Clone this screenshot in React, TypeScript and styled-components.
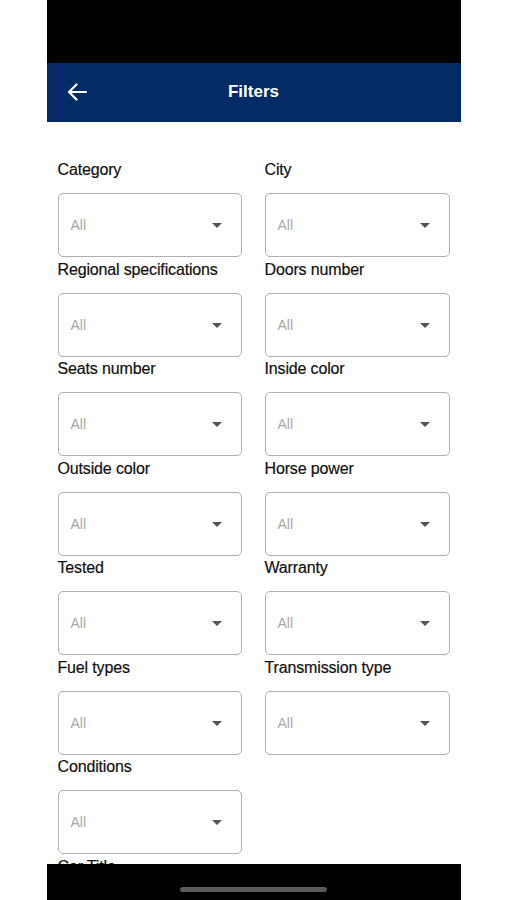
import styled, { createGlobalStyle } from "styled-components";

const GlobalStyle = createGlobalStyle`
  html, body {
    margin: 0;
    padding: 0;
    background: #ffffff;
    font-family: "Liberation Sans", Arial, sans-serif;
  }
`;

const filters = [
  "Category",
  "City",
  "Regional specifications",
  "Doors number",
  "Seats number",
  "Inside color",
  "Outside color",
  "Horse power",
  "Tested",
  "Warranty",
  "Fuel types",
  "Transmission type",
  "Conditions",
];

const Page = styled.div`
  width: 507px;
  height: 900px;
  display: flex;
  justify-content: center;
  background: #ffffff;
`;

const Phone = styled.div`
  width: 414px;
  height: 900px;
  display: flex;
  flex-direction: column;
  position: relative;
  overflow: hidden;
  background: #ffffff;
`;

const StatusBar = styled.div`
  height: 63px;
  background: #000000;
  flex-shrink: 0;
`;

const Header = styled.div`
  height: 59px;
  background: #052b66;
  display: flex;
  align-items: center;
  position: relative;
  flex-shrink: 0;
`;

const BackButton = styled.div`
  width: 20px;
  height: 18px;
  margin-left: 20px;
  margin-top: -2px;
  display: flex;
`;

const Title = styled.div`
  position: absolute;
  left: 0;
  right: 0;
  top: 19px;
  text-align: center;
  color: #ffffff;
  font-size: 17px;
  font-weight: bold;
  pointer-events: none;
`;

const Content = styled.div`
  flex: 1;
  overflow: hidden;
  padding: 38px 11px 0 11px;
`;

const Grid = styled.div`
  display: grid;
  grid-template-columns: 184px 185px;
  column-gap: 23px;
  row-gap: 2.5px;
`;

const Field = styled.div<{ $col?: number }>`
  display: flex;
  flex-direction: column;
  grid-column: ${(p) => (p.$col ? p.$col : "auto")};
`;

const Label = styled.div`
  font-size: 16px;
  line-height: 20px;
  color: #111111;
  margin-bottom: 13px;
  white-space: nowrap;
  letter-spacing: -0.15px;
  -webkit-text-stroke: 0.2px #111111;
`;

const Select = styled.div`
  height: 64px;
  box-sizing: border-box;
  border: 1.5px solid #b0b0b0;
  border-radius: 5px;
  display: flex;
  align-items: center;
  justify-content: space-between;
  padding: 0 19px 0 12px;
`;

const Placeholder = styled.span`
  font-size: 14px;
  color: #a8a8a8;
`;

const Caret = styled.span`
  width: 0;
  height: 0;
  border-left: 5px solid transparent;
  border-right: 5px solid transparent;
  border-top: 5px solid #555555;
  margin-top: 1px;
`;

const BottomBar = styled.div`
  position: absolute;
  left: 0;
  right: 0;
  bottom: 0;
  height: 36px;
  background: #000000;
  display: flex;
  justify-content: center;
`;

const HomeIndicator = styled.div`
  width: 147px;
  height: 5px;
  border-radius: 3px;
  background: #5a5a5a;
  margin-top: 23px;
`;

const FilterField = ({ label }: { label: string }) => (
  <Field>
    <Label>{label}</Label>
    <Select>
      <Placeholder>All</Placeholder>
      <Caret />
    </Select>
  </Field>
);

const App = () => {
  return (
    <Page>
      <GlobalStyle />
      <Phone>
        <StatusBar />
        <Header>
          <BackButton>
            <svg width="20" height="18" viewBox="0 0 20 18" fill="none">
              <path
                d="M19 9H2M9.5 1.5L2 9l7.5 7.5"
                stroke="#ffffff"
                strokeWidth="2.2"
                strokeLinecap="round"
                strokeLinejoin="round"
              />
            </svg>
          </BackButton>
          <Title>Filters</Title>
        </Header>
        <Content>
          <Grid>
            {filters.map((f) => (
              <FilterField key={f} label={f} />
            ))}
            <Field $col={1}>
              <Label>Car Title</Label>
            </Field>
          </Grid>
        </Content>
        <BottomBar>
          <HomeIndicator />
        </BottomBar>
      </Phone>
    </Page>
  );
};

export default App;
